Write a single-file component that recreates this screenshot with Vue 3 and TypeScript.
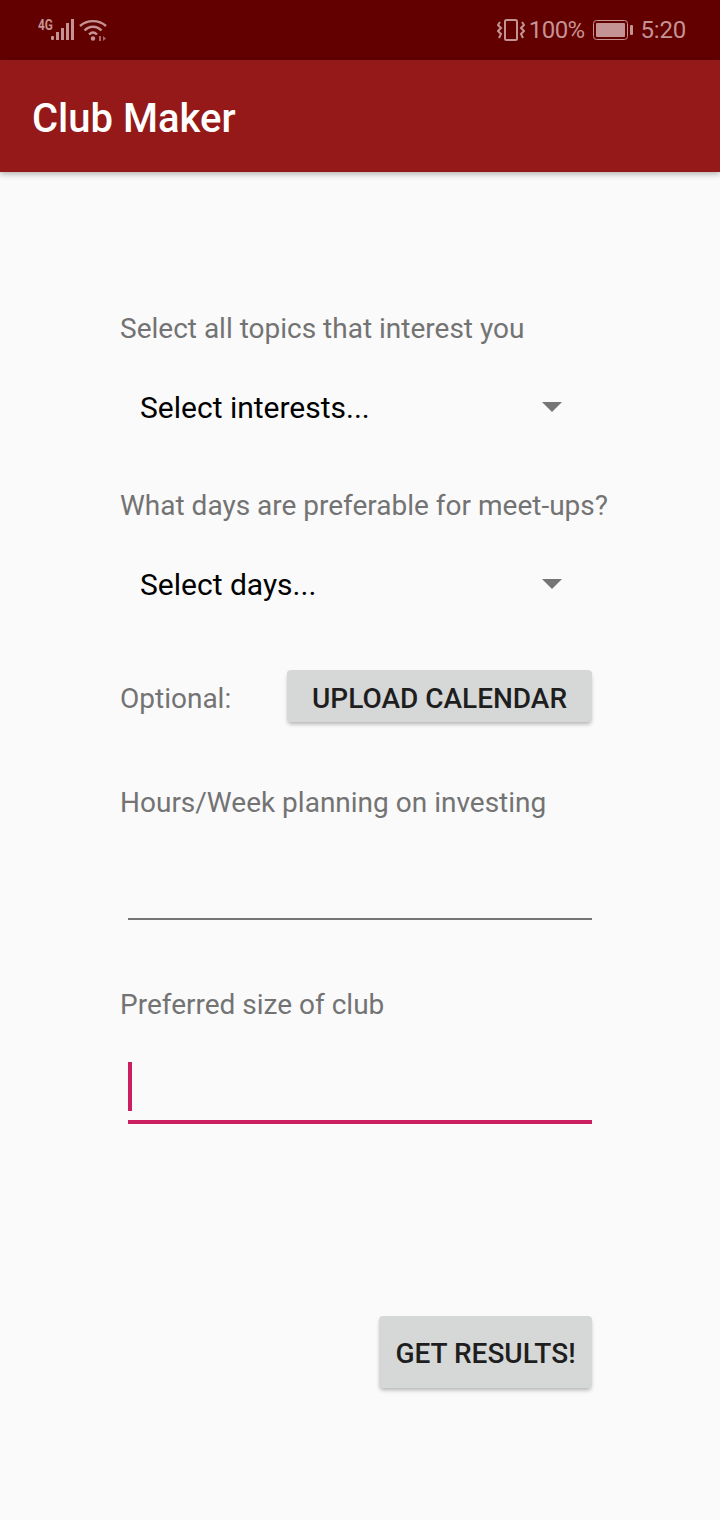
<template>
  <div class="screen">
    <div class="status-bar">
      <div class="status-left">
        <span class="net">4G</span>
        <svg class="signal" width="24" height="23" viewBox="0 0 24 23">
          <rect x="1" y="18" width="3" height="4" rx="1" />
          <rect x="6" y="14" width="3" height="8" />
          <rect x="11" y="10" width="3" height="12" />
          <rect x="16" y="5" width="3" height="17" />
          <rect x="21" y="1" width="3" height="21" />
        </svg>
        <svg class="wifi" width="28" height="24" viewBox="0 0 28 24">
          <path d="M1 8C8 1.500 20 1.500 27 8M5.500 12.500C10.500 7.500 17.500 7.500 22.500 12.500M10 16.500C12.500 14 15.500 14 18 16.500" fill="none" stroke="currentColor" stroke-width="2.400" />
          <circle cx="14" cy="20.500" r="2.200" fill="currentColor" />
          <path d="M20 18H22V23H20ZM24 18V23L27 20.500Z" fill="currentColor" opacity="0.700" />
        </svg>
      </div>
      <div class="status-right">
        <svg class="vibrate" width="28" height="22" viewBox="0 0 28 22">
          <rect x="8" y="1" width="12" height="20" rx="1.500" fill="none" stroke="currentColor" stroke-width="2" />
          <path d="M3 3L1 6L4 9L1 12L4 15L2 19M25 3L27 6L24 9L27 12L24 15L26 19" fill="none" stroke="currentColor" stroke-width="2" />
        </svg>
        <span class="pct">100%</span>
        <svg class="battery" width="40" height="20" viewBox="0 0 40 20">
          <rect x="0.500" y="0.500" width="34" height="19" rx="3" fill="none" stroke="currentColor" />
          <rect x="3" y="3" width="29" height="14" rx="1" fill="currentColor" />
          <rect x="37" y="5" width="3" height="10" rx="1" fill="currentColor" />
        </svg>
        <span class="clock">5:20</span>
      </div>
    </div>

    <header class="app-bar">Club Maker</header>

    <main class="form">
      <label class="label first">Select all topics that interest you</label>
      <div class="spinner">
        <span>Select interests...</span>
        <i class="arrow"></i>
      </div>

      <label class="label second">What days are preferable for meet-ups?</label>
      <div class="spinner">
        <span>Select days...</span>
        <i class="arrow"></i>
      </div>

      <div class="optional-row">
        <span class="label">Optional:</span>
        <button class="btn btn-upload">UPLOAD CALENDAR</button>
      </div>

      <label class="label hours">Hours/Week planning on investing</label>
      <div class="input"></div>

      <label class="label size">Preferred size of club</label>
      <div class="input focused"><i class="cursor"></i></div>

      <div class="actions">
        <button class="btn btn-results">GET RESULTS!</button>
      </div>
    </main>
  </div>
</template>

<script setup lang="ts">
</script>

<style>
body {
  margin: 0;
  background: #fafafa;
}
</style>

<style scoped>
.screen {
  width: 720px;
  height: 1520px;
  background: #fafafa;
  font-family: Roboto, "Liberation Sans", sans-serif;
  overflow: hidden;
}
.status-bar {
  height: 60px;
  background: #620000;
  color: #c49393;
  display: flex;
  justify-content: space-between;
  align-items: center;
  padding: 0 34px 0 38px;
  box-sizing: border-box;
}
.status-left {
  display: flex;
  align-items: flex-start;
  height: 30px;
  margin-top: 0;
}
.net {
  font-size: 14px;
  font-weight: 700;
  line-height: 14px;
  width: 12px;
  margin-top: 3px;
  transform: scaleX(0.85);
  transform-origin: left;
}
.signal {
  fill: currentColor;
  margin-top: 3px;
}
.wifi {
  margin-left: 5px;
  margin-top: 3px;
}
.status-right {
  display: flex;
  align-items: center;
}
.pct {
  font-size: 24px;
  margin-left: 4px;
  letter-spacing: -0.600px;
}
.battery {
  margin-left: 8px;
}
.clock {
  font-size: 24px;
  margin-left: 8px;
  letter-spacing: -0.200px;
}
.app-bar {
  height: 112px;
  background: #951919;
  color: #fff;
  font-size: 40px;
  font-weight: 500;
  line-height: 118px;
  padding-left: 32px;
  box-shadow: 0 2px 6px rgba(0, 0, 0, 0.3);
  position: relative;
}
.form {
  display: flex;
  flex-direction: column;
  padding: 0 128px 0 120px;
}
.label {
  display: block;
  font-size: 28px;
  line-height: 32px;
  color: #737373;
  white-space: nowrap;
}
.first {
  margin-top: 141px;
}
.second {
  margin-top: 51px;
}
.spinner {
  height: 64px;
  margin-top: 30px;
  padding-left: 20px;
  display: flex;
  align-items: center;
  justify-content: space-between;
  font-size: 30px;
  color: #000;
}
.arrow {
  width: 0;
  height: 0;
  margin-right: 30px;
  border-left: 10px solid transparent;
  border-right: 10px solid transparent;
  border-top: 10px solid #757575;
}
.optional-row {
  margin-top: 54px;
  display: flex;
  align-items: center;
  justify-content: space-between;
}
.optional-row .label {
  padding-top: 6px;
}
.btn {
  border: none;
  border-radius: 4px;
  background: #d6d7d7;
  color: #1e1e1e;
  font-family: inherit;
  font-weight: 500;
  font-size: 28px;
  padding: 0;
  box-shadow: 0 3px 4px -1px rgba(0, 0, 0, 0.3);
}
.btn-upload {
  width: 305px;
  height: 52px;
  padding-top: 4px;
}
.hours {
  margin-top: 65px;
}
.input {
  height: 99px;
  margin-left: 8px;
  border-bottom: 2px solid #757575;
  position: relative;
}
.size {
  margin-top: 69px;
}
.focused {
  height: 81px;
  margin-top: 18px;
  border-bottom: 4px solid #cb1f62;
}
.cursor {
  position: absolute;
  left: 0;
  top: 23px;
  width: 4px;
  height: 49px;
  background: #cb1f62;
}
.actions {
  margin-top: 192px;
  display: flex;
  justify-content: flex-end;
}
.btn-results {
  width: 213px;
  height: 72px;
  padding-top: 2px;
}
</style>
